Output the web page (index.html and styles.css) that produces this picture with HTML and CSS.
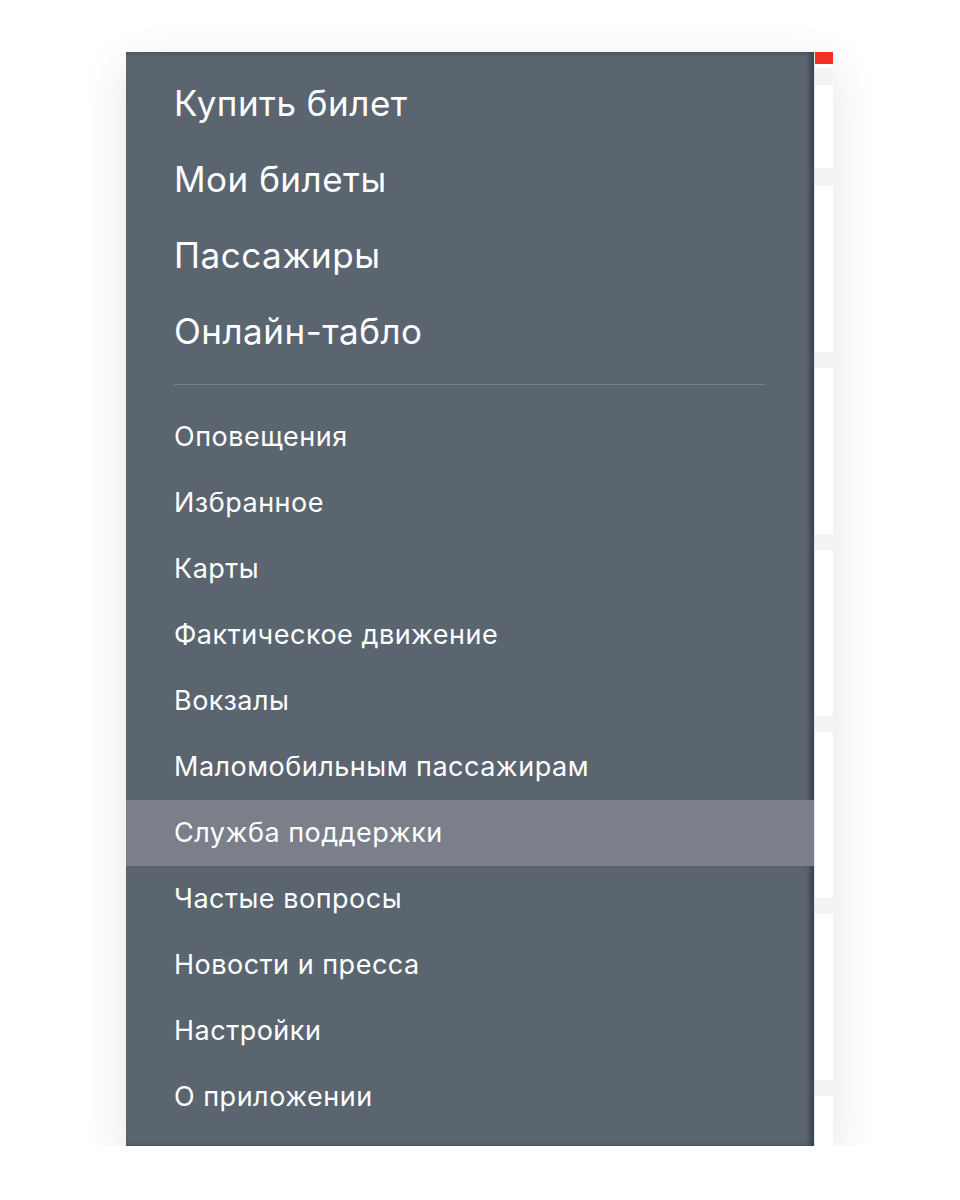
FILE: index.html
```html
<!DOCTYPE html>
<html lang="ru">
<head>
    <meta charset="UTF-8">
    <meta name="viewport" content="width=device-width, initial-scale=1.0">
    <title>Меню</title>
    <link rel="stylesheet" href="styles.css">
</head>
<body>
    <div class="screen">
        <nav class="drawer">
            <ul class="main-menu">
                <li>Купить билет</li>
                <li>Мои билеты</li>
                <li>Пассажиры</li>
                <li>Онлайн-табло</li>
            </ul>
            <div class="divider"></div>
            <ul class="sub-menu">
                <li>Оповещения</li>
                <li>Избранное</li>
                <li>Карты</li>
                <li>Фактическое движение</li>
                <li>Вокзалы</li>
                <li>Маломобильным пассажирам</li>
                <li class="active">Служба поддержки</li>
                <li>Частые вопросы</li>
                <li>Новости и пресса</li>
                <li>Настройки</li>
                <li>О приложении</li>
            </ul>
        </nav>
        <div class="content">
            <div class="topbar"></div>
            <div class="band band-first"></div>
            <div class="band band-second"></div>
            <div class="band"></div>
            <div class="band"></div>
            <div class="band"></div>
            <div class="band"></div>
            <div class="band"></div>
        </div>
    </div>
</body>
</html>
```

FILE: styles.css
```css
*{
    margin:0;
    padding:0;
}

body{
    background:#fff;
    font-family:Inter, "Liberation Sans", Arial, sans-serif;
}

.screen{
    width:707px;
    height:1094px;
    margin:52px 0 0 126px;
    display:flex;
    box-shadow:0 14px 44px rgba(0,0,0,0.11);
}

.drawer{
    width:688px;
    flex-shrink:0;
    background:#5a6570;
    color:#fff;
    padding-top:13px;
    box-shadow:inset -4px 0 5px rgba(20,24,30,0.45);
}

.drawer ul{
    list-style:none;
}

.main-menu li{
    height:76px;
    line-height:76px;
    padding-left:48px;
    font-size:35px;
    letter-spacing:0.5px;
}

.divider{
    height:1px;
    background:#76818c;
    margin:15px 49px 19px 48px;
}

.sub-menu li{
    height:66px;
    line-height:66px;
    padding-left:48px;
    font-size:27px;
    letter-spacing:0.5px;
}

.sub-menu li.active{
    background:#7b7f8a;
}

.content{
    flex:1;
    background:#fff;
    border-left:1px solid #e6e6e8;
}

.topbar{
    height:12px;
    background:#ee3124;
}

.band{
    height:16px;
    margin-top:166px;
    background:#f4f3f3;
}

.band-first{
    margin-top:4px;
    height:17px;
}

.band-second{
    margin-top:83px;
    height:18px;
}
```
